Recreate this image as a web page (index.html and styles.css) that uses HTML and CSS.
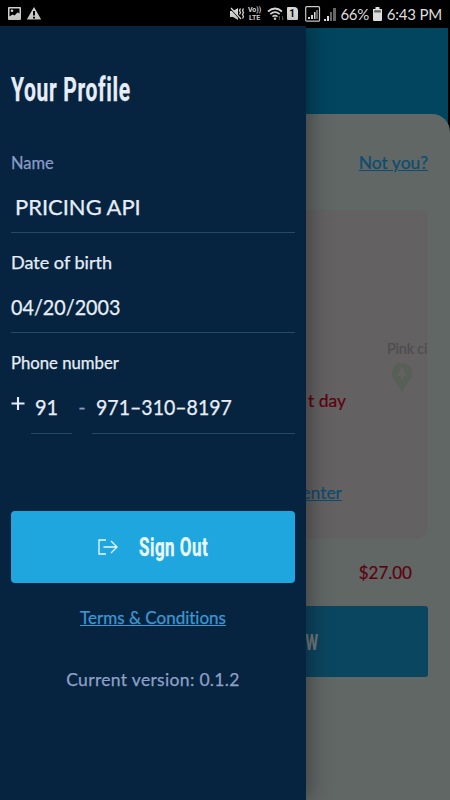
FILE: index.html
```
<!DOCTYPE html>
<html lang="en">
<head>
<meta charset="utf-8">
<title>Your Profile</title>
<link rel="stylesheet" href="styles.css">
</head>
<body>
<div class="phone">
  <header class="status">
    <svg class="status-left" width="42" height="27" viewBox="0 0 42 27">
      <path fill="#d8d8d8" fill-rule="evenodd" d="M9 7h11q1 0 1 1v11q0 1-1 1H9q-1 0-1-1V8q0-1 1-1zM9.500 8.500v8l3-2 2 1 3-3 2 1v-5z"/>
      <circle cx="12" cy="10.800" r="1.300" fill="#d8d8d8"/>
      <path fill="#d8d8d8" fill-rule="evenodd" d="M34 7l7.200 12.500H26.800zM33 11v4.500h2V11zM33 16.700v1.800h2v-1.800z"/>
    </svg>
    <div class="status-right">
      <svg width="16" height="14" viewBox="0 0 16 14"><path fill="#ddd" d="M1 4h3l5-3v12L4 10H1z"/><path d="M1 1l11 12" stroke="#000" stroke-width="1.200"/><path d="M2 1l10 11M11.500 1.500l-1 2 1 2-1 2M14.500 1.500l-1 2 1 2-1 2 1 2-1 2" fill="none" stroke="#ddd" stroke-width="1.300"/></svg>
      <span class="volte">Vo))<br>LTE</span>
      <svg class="wifi" width="18" height="14" viewBox="0 0 18 14"><path d="M1 4.500q7-6 14 0M3.300 7.200q4.700-4 9.400 0M5.500 9.700q2.500-2 5 0" fill="none" stroke="#ddd" stroke-width="1.700"/><circle cx="8" cy="11.800" r="1.300" fill="#ddd"/><path d="M12.500 13V9l-1 1.500M15.500 9v4l1-1.500" fill="none" stroke="#555"/></svg>
      <span class="sim">1</span>
      <svg class="signal" width="31" height="16" viewBox="0 0 31 16"><rect x=".7" y=".7" width="13.800" height="14.500" rx="1" fill="none" stroke="#ccc" stroke-width="1.200"/><path fill="#ddd" d="M3 11h2v2H3zM6 9h2v4H6zM9 6h1.500v7H9zM19 13h2v2h-2zM22 10h2v5h-2z"/><path fill="#666" d="M11 4h2v9h-2zM25 6h2v9h-2zM28 2h3v13h-3z"/></svg>
      <span class="percent">66%</span>
      <svg class="battery" width="9" height="14" viewBox="0 0 9 14"><path fill="#ddd" d="M2.500 0h4v2H9v11q0 1-1 1H1q-1 0-1-1V2h2.500z"/><path fill="#666" d="M1.200 3.200h6.600v2.300H1.200z"/></svg>
      <span class="clock">6:43 PM</span>
    </div>
  </header>
  <main class="screen">
    <section class="sheet">
      <a class="not-you"><span>Not you?</span></a>
      <div class="card">
        <div class="place">
          <span>Pink ci</span>
          <svg width="20" height="30" viewBox="0 0 20 30"><path fill="#566057" fill-rule="evenodd" d="M10 0a10 10 0 0 1 10 10c0 6-6 11-10 19C6 21 0 16 0 10A10 10 0 0 1 10 0zM10 3l3 5h-1l3 5h-4v3H9v-3H5l3-5H7z"/></svg>
        </div>
        <div class="visit">t day</div>
        <a class="center">enter</a>
      </div>
      <div class="price"><span>$27.00</span></div>
      <div class="buy"><span>W</span></div>
    </section>
  </main>
  <aside class="drawer">
    <h1><span>Your Profile</span></h1>
    <div class="label muted"><span class="name-label">Name</span></div>
    <div class="field name"><span>PRICING API</span></div>
    <div class="label"><span class="dob-label">Date of birth</span></div>
    <div class="field dob"><span>04/20/2003</span></div>
    <div class="label"><span class="phone-label">Phone number</span></div>
    <div class="phone-row">
      <svg class="plus" width="14" height="15" viewBox="0 0 14 15"><title>+</title><path d="M7 1v13M.5 7.500h13" stroke="#e6edf8" stroke-width="2.100"/></svg>
      <div class="field code"><span>91</span></div>
      <span class="dash">-</span>
      <div class="field number"><span>971–310–8197</span></div>
    </div>
    <div class="signout">
      <svg width="20" height="16" viewBox="0 0 20 16"><path d="M8 1H1v14h7M5.500 8H19M13 2l6 6-6 6" fill="none" stroke="#e9faff" stroke-width="1.300"/></svg>
      <span>Sign Out</span>
    </div>
    <a class="terms"><span>Terms &amp; Conditions</span></a>
    <div class="version"><span>Current version: 0.1.2</span></div>
  </aside>
</div>
</body>
</html>
```
FILE: styles.css
```
* { box-sizing: border-box; }
body { margin: 0; background: #000; font-family: Lato, "Noto Sans", sans-serif; font-variant-ligatures: none; }
.phone { position: relative; width: 450px; height: 800px; overflow: hidden; background: #000; }
span { white-space: nowrap; }

.status { height: 27px; display: flex; justify-content: space-between; background: #000; color: #ddd; }
.status-right { display: flex; align-items: center; padding-right: 8px; }
.volte { width: 14px; margin-left: 3px; font: bold 7px/8px Roboto, sans-serif; text-align: center; }
.wifi { margin-left: 5px; }
.sim { width: 11px; height: 13px; margin-left: 2px; border-radius: 1px 4px 1px 1px; background: #ddd; color: #000; font: bold 10px/13px Roboto, sans-serif; text-align: center; }
.signal { margin-left: 7px; }
.percent { margin-left: 5px; font-size: 15px; letter-spacing: -.4px; }
.battery { margin-left: 4px; }
.clock { margin-left: 5px; font-size: 15px; letter-spacing: -.2px; }

.screen { height: 773px; padding-top: 86px; margin-right: 2px; background: #02455f; border-top: 1px solid #000; }
.sheet { height: 687px; margin-right: -2px; padding: 0 22px 0 200px; background: #606765; border-top-right-radius: 18px; -webkit-text-stroke: .2px; }
.not-you { display: flex; justify-content: flex-end; align-items: center; height: 96px; color: #0d4c70; font-size: 17.500px; text-decoration: underline; }
.card { height: 329px; background: #636162; border-radius: 0 6px 12px 0; overflow: hidden; }
.place { height: 181px; padding-top: 129px; padding-left: 187px; color: #4e4d4f; font-size: 14.500px; letter-spacing: -.2px; line-height: 20px; }
.place svg { display: block; margin: 4px 0 0 5px; }
.visit { height: 20px; width: 146px; text-align: right; color: #60000f; font-size: 17.500px; line-height: 20px; }
.center { display: block; width: 142px; margin-top: 72px; text-align: right; color: #0d4c70; font-size: 17.500px; line-height: 20px; text-decoration: underline; }
.price { height: 67px; padding-right: 16px; text-align: right; color: #60000f; font-size: 17px; line-height: 68px; }
.buy { height: 71px; border-radius: 3px; background: #0b4660; color: #72797b; font: bold 22px/73px Roboto, sans-serif; }
.buy span { display: inline-block; width: 118px; text-align: right; transform: scaleX(.65); transform-origin: right; }

.drawer { position: absolute; left: 0; top: 26px; width: 306px; height: 774px; padding: 0 11px; background: #06243f; color: #e6edf8; box-shadow: 2px 0 22px rgba(0, 0, 0, .4); -webkit-text-stroke: .25px; }
h1 { margin: 0; padding-top: 44px; height: 122px; font: bold 32.500px/40px Roboto, sans-serif; }
h1 span { display: inline-block; letter-spacing: 1px; transform: scaleX(.648); transform-origin: left; }
.label { height: 30px; font-size: 17.500px; line-height: 30px; }
.muted { height: 29px; color: #8a9bc8; }
.field { border-bottom: 1px solid #234b66; font-size: 21px; }
.field span, .label span { display: inline-block; transform-origin: left; }
.name-label { transform: scaleX(.94); }
.dob-label { transform: scaleX(1.03); }
.phone-label { transform: scaleX(.955); }
.name span { transform: scaleX(1.045); }
.dob span { transform: scaleX(.94); }
.name { height: 56px; padding-left: 4px; line-height: 60px; margin-bottom: 15px; }
.dob { height: 55px; line-height: 57px; margin-bottom: 15px; }
.phone-row { display: flex; height: 56px; }
.plus { margin-top: 18px; }
.code { width: 41px; margin-left: 6px; padding-left: 4px; line-height: 58px; }
.code span { transform: scaleX(.95); }
.dash { width: 20px; text-align: center; color: #8a9bc8; font-size: 20px; line-height: 56px; }
.number { flex: 1; padding-left: 4px; line-height: 58px; }
.number span { transform: scaleX(.93); }
.signout { display: flex; align-items: center; height: 72px; margin-top: 77px; padding-left: 87px; border-radius: 4px; background: #20a6df; color: #e9faff; font: bold 26px/72px Roboto, sans-serif; }
.signout span { margin-left: 21px; letter-spacing: .7px; transform: scaleX(.655); transform-origin: left; }
.terms { display: block; height: 70px; text-align: center; color: #3c97d2; font-size: 17px; line-height: 70px; text-decoration: underline; }
.version { height: 54px; text-align: center; color: #8da0c8; font-size: 17.500px; letter-spacing: .33px; line-height: 54px; }
```
